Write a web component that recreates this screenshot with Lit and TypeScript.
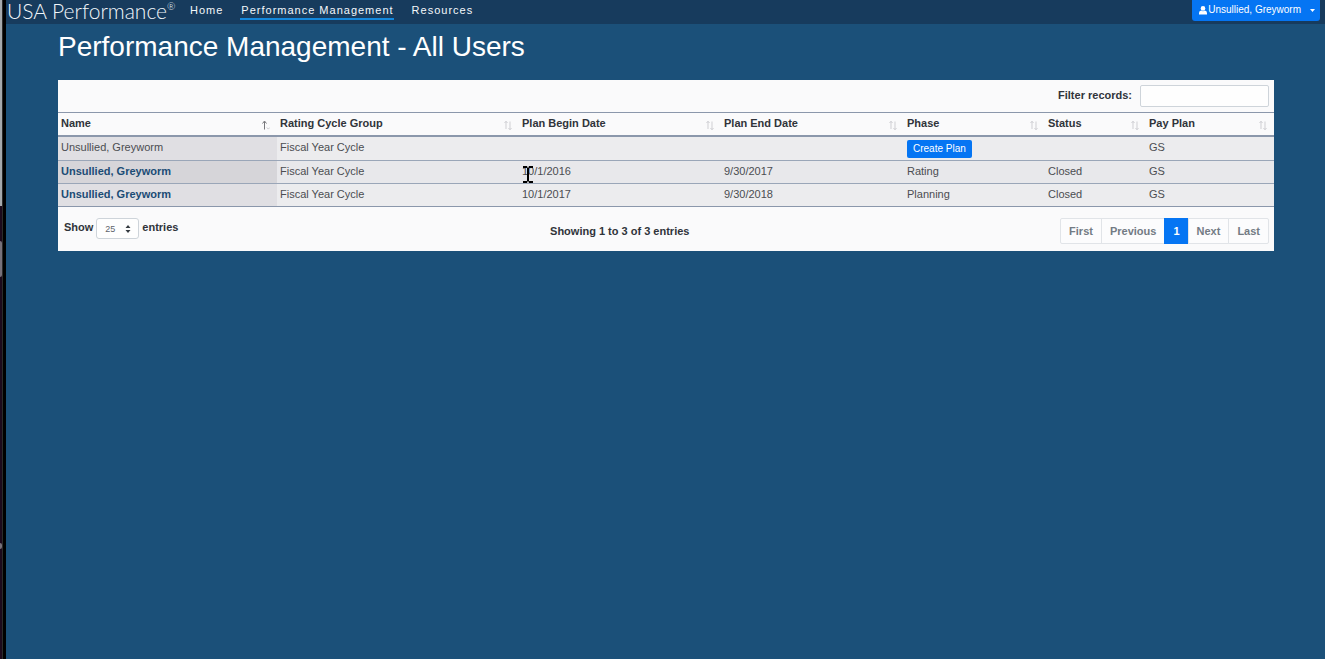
import { LitElement, html, css, svg } from "lit";
import { customElement, state } from "lit/decorators.js";
import { classMap } from "lit/directives/class-map.js";

interface Plan {
  name: string;
  cycle: string;
  begin: string;
  end: string;
  phase: string;
  status: string;
  payPlan: string;
}

const PLANS: Plan[] = [
  { name: "Unsullied, Greyworm", cycle: "Fiscal Year Cycle", begin: "", end: "", phase: "", status: "", payPlan: "GS" },
  { name: "Unsullied, Greyworm", cycle: "Fiscal Year Cycle", begin: "10/1/2016", end: "9/30/2017", phase: "Rating", status: "Closed", payPlan: "GS" },
  { name: "Unsullied, Greyworm", cycle: "Fiscal Year Cycle", begin: "10/1/2017", end: "9/30/2018", phase: "Planning", status: "Closed", payPlan: "GS" },
];

const COLUMNS = ["Name", "Rating Cycle Group", "Plan Begin Date", "Plan End Date", "Phase", "Status", "Pay Plan"];

const sortIcon = (active: boolean) => html`<svg class="sort" width="8" height="11" viewBox="0 0 8 11" aria-hidden="true">
  ${active
    ? svg`<path d="M2.5 9.5V1.5M0.5 3.5L2.5 1L4.5 3.5" stroke="#77777b"/><path d="M4.8 7.5L6.3 9.1L7.8 7.5" stroke="#c9c9cd"/>`
    : svg`<path d="M2 9V1.5M0.5 3L2 1.2L3.5 3M6 1.5V9.5M4.5 8L6 9.8L7.5 8" stroke="#cfcfd3"/>`}
</svg>`;

@customElement("top-bar")
class TopBar extends LitElement {
  static styles = css`
    :host { display: block; }
    .bar {
      display: flex;
      align-items: flex-start;
      height: 24px;
      padding: 0 5px 0 1px;
      background: #173b5d;
      color: #fff;
    }
    .brand {
      display: flex;
      align-items: flex-start;
      width: 182px;
      font: 300 21px/24px Lato, sans-serif;
      color: #f2f7fb;
      text-decoration: none;
      white-space: nowrap;
    }
    .name { margin-top: -1px; }
    .mark { font-size: 10px; line-height: 12px; }
    nav { display: flex; gap: 17px; flex: 1; }
    .link {
      padding: 2px 0 0 1px;
      font-size: 11px;
      line-height: 16px;
      letter-spacing: 1px;
      color: #f4f8fb;
      text-decoration: none;
      border-bottom: 2px solid transparent;
    }
    .current { border-color: #1488dc; }
    .user {
      display: flex;
      align-items: center;
      height: 21px;
      padding: 0 5px 1px 7px;
      border: 0;
      border-radius: 0 0 3px 3px;
      background: #0575f3;
      color: #fff;
      font: 10px/16px "Liberation Sans", Arial, sans-serif;
    }
    .person { margin-right: 1px; }
    .caret { margin-left: 9px; }
  `;
  render() {
    return html`<header class="bar">
      <a class="brand" href="#"><span class="name">USA Performance</span><span class="mark">®</span></a>
      <nav>
        <a class="link" href="#">Home</a>
        <a class="link current" href="#" aria-current="page">Performance Management</a>
        <a class="link" href="#">Resources</a>
      </nav>
      <button class="user" type="button">
        <svg class="person" width="8" height="9" viewBox="0 0 8 9" aria-hidden="true"><circle cx="4" cy="2.4" r="2.3" fill="#fff"/><path d="M0 8.5V7Q0 4.8 2.2 4.6Q4 5.8 5.8 4.6Q8 4.8 8 7V8.5Z" fill="#fff"/></svg>
        Unsullied, Greyworm
        <svg class="caret" width="5" height="3" viewBox="0 0 5 3" aria-hidden="true"><path d="M0 0H5L2.5 3Z" fill="#fff"/></svg>
      </button>
    </header>`;
  }
}

@customElement("plan-table")
class PlanTable extends LitElement {
  @state() private filter = "";

  static styles = css`
    :host { display: block; background: #fafafb; color: #30343a; font-size: 11px; line-height: 16px; }
    .filter {
      display: flex;
      justify-content: flex-end;
      gap: 8px;
      padding: 5px 5px 5px 6px;
      line-height: 20px;
      font-weight: bold;
    }
    .filter-box {
      box-sizing: border-box;
      width: 129px;
      height: 22px;
      padding: 0 6px;
      border: 1px solid #ced4da;
      border-radius: 2px;
      background: #fefefe;
      font: 11px "Liberation Sans", Arial, sans-serif;
    }
    .plans { width: 100%; table-layout: fixed; border-collapse: separate; border-spacing: 0; border-top: 1px solid #8b97ab; }
    .c0 { width: 219px; } .c1 { width: 242px; } .c2 { width: 202px; } .c3 { width: 183px; }
    .c4 { width: 141px; } .c5 { width: 101px; } .c6 { width: 128px; }
    th { padding: 2px 3px 4px; text-align: left; border-bottom: 2px solid #8b97ab; }
    .head { display: flex; justify-content: space-between; }
    .sort { fill: none; stroke-width: 1; margin: 5px 4px 0 0; }
    td { padding: 2px 3px 4px; vertical-align: top; border-bottom: 1px solid #9aa6b8; background: #ececee; color: #4b4d51; }
    tr:last-child td { border-color: #8b97ab; }
    .name { background: #e0dfe3; }
    .alt td { background: #e8e8eb; }
    .alt .name { background: #d6d5d9; }
    .open { color: #1b4c75; font-weight: bold; text-decoration: none; }
    .create {
      display: block;
      height: 18px;
      margin: 1px 0 -2px;
      padding: 0 6px;
      border: 0;
      border-radius: 2px;
      background: #0575f3;
      color: #fff;
      font: 10px/18px "Liberation Sans", Arial, sans-serif;
    }
    .foot {
      display: flex;
      justify-content: space-between;
      align-items: flex-start;
      padding: 11px 5px 7px 6px;
      font-weight: bold;
    }
    .length { display: flex; gap: 3px; line-height: 18px; }
    .picker { position: relative; display: flex; }
    .size {
      appearance: none;
      width: 43px;
      height: 21px;
      padding: 0 8px;
      border: 1px solid #ced4da;
      border-radius: 3px;
      background: #fefefe;
      color: #5d636b;
      font: 9px "Liberation Sans", Arial, sans-serif;
    }
    .arrows { position: absolute; right: 8px; top: 7px; pointer-events: none; }
    .info { line-height: 26px; }
    .pages { display: flex; }
    .page {
      height: 26px;
      padding: 0 8px;
      margin-left: -1px;
      border: 1px solid #e1e4e8;
      background: #fcfcfd;
      color: #737b84;
      font: bold 11px/24px "Liberation Sans", Arial, sans-serif;
    }
    .page:first-child { border-radius: 2px 0 0 2px; }
    .page:last-child { border-radius: 0 2px 2px 0; }
    .on { background: #0575f3; border-color: #0575f3; color: #fff; }
  `;

  render() {
    const q = this.filter.toLowerCase();
    const rows = PLANS.filter((p) => Object.values(p).join(" ").toLowerCase().includes(q));
    return html`
      <div class="filter">
        <label for="filter">Filter records:</label>
        <input id="filter" class="filter-box" type="text" @input=${(e: Event) => (this.filter = (e.target as HTMLInputElement).value)} />
      </div>
      <table class="plans">
        <colgroup>${COLUMNS.map((_, i) => html`<col class="c${i}" />`)}</colgroup>
        <thead>
          <tr>${COLUMNS.map((c, i) => html`<th scope="col"><div class="head">${c}${sortIcon(i === 0)}</div></th>`)}</tr>
        </thead>
        <tbody>
          ${rows.map((p, i) => html`<tr class=${classMap({ alt: i % 2 === 1 })}>
            <td class="name">${p.begin ? html`<a class="open" href="#">${p.name}</a>` : p.name}</td>
            <td>${p.cycle}</td>
            <td>${p.begin}</td>
            <td>${p.end}</td>
            <td>${p.phase || html`<button class="create" type="button">Create Plan</button>`}</td>
            <td>${p.status}</td>
            <td>${p.payPlan}</td>
          </tr>`)}
        </tbody>
      </table>
      <div class="foot">
        <div class="length">
          <label for="size">Show</label>
          <span class="picker">
            <select id="size" class="size"><option>25</option><option>50</option><option>100</option></select>
            <svg class="arrows" width="6" height="8" viewBox="0 0 6 8" aria-hidden="true"><path d="M0.5 3L3 0L5.5 3ZM0.5 5L3 8L5.5 5Z" fill="#343a40"/></svg>
          </span>
          <span>entries</span>
        </div>
        <div class="info">Showing 1 to ${rows.length} of ${rows.length} entries</div>
        <div class="pages">
          ${["First", "Previous", "1", "Next", "Last"].map((p) => html`<button type="button" class=${classMap({ page: true, on: p === "1" })}>${p}</button>`)}
        </div>
      </div>`;
  }
}

@customElement("app-root")
class AppRoot extends LitElement {
  static styles = css`
    :host {
      display: flex;
      min-height: 100vh;
      background: #1b5079;
      font-family: "Liberation Sans", Arial, sans-serif;
    }
    .edge { flex: none; width: 6px; background: linear-gradient(to right, #1c0a1c 2px, #2b2b2b 2px, #2b2b2b 3px, #000 3px); }
    .pane { width: 2px; height: 206px; background: #a5a9ac; }
    .thumb { width: 2px; height: 36px; margin-top: 35px; background: #77717a; border-radius: 0 2px 2px 0; }
    .dot { width: 2px; height: 6px; margin-top: 266px; background: #77717a; border-radius: 0 3px 3px 0; }
    .page { flex: 1; min-width: 0; }
    main { padding: 0 51px 0 52px; }
    h1 { margin: 0; padding: 7px 0 17px; font-size: 28px; line-height: 32px; font-weight: normal; color: #fff; }
    .cursor { position: absolute; left: 523px; top: 166px; pointer-events: none; }
  `;
  render() {
    return html`
      <div class="edge"><div class="pane"></div><div class="thumb"></div><div class="dot"></div></div>
      <div class="page">
        <top-bar></top-bar>
        <main>
          <h1>Performance Management - All Users</h1>
          <plan-table></plan-table>
        </main>
      </div>
      <svg class="cursor" width="10" height="17" viewBox="0 0 10 17" aria-hidden="true"><path d="M0 1H4.2M5.8 1H10M0 16H4.2M5.8 16H10M5 1.5V15.5" stroke="#000" stroke-width="2" fill="none"/></svg>`;
  }
}
